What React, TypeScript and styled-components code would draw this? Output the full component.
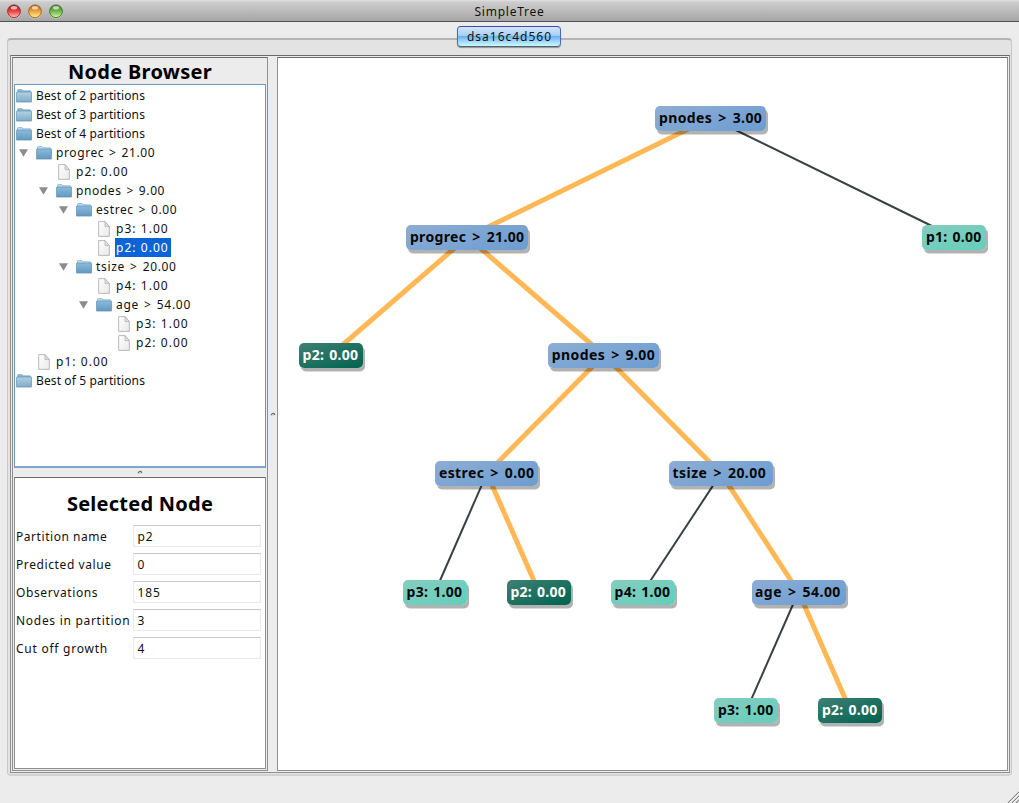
import React from "react";
import styled, { createGlobalStyle } from "styled-components";

const GlobalStyle = createGlobalStyle`
  * { box-sizing: border-box; }
  html, body { margin: 0; padding: 0; overflow: hidden; background: #ececec; }
`;

const Window = styled.div`
  position: relative;
  width: 1019px;
  height: 803px;
  display: flex;
  flex-direction: column;
  background: #ececec;
  color: #111;
  font: 12px/16px "Noto Sans", "Liberation Sans", sans-serif;
  white-space: pre;
`;

const TitleBar = styled.header`
  display: flex;
  align-items: center;
  height: 22px;
  flex: none;
  padding: 0 7px;
  background: linear-gradient(#e2e2e2 0, #cdcdcd 2px, #a6a6a6 100%);
  border-bottom: 1px solid #515151;
`;

const Lights = styled.div`
  display: flex;
  gap: 7px;
  width: 60px;
`;

const Title = styled.h1`
  flex: 1;
  margin: 0 60px 0 0;
  padding-top: 2px;
  text-align: center;
  font-size: 12px;
  font-weight: 400;
  line-height: 19px;
  letter-spacing: 0.75px;
`;

const TabStrip = styled.div`
  position: relative;
  z-index: 1;
  display: flex;
  justify-content: center;
  height: 25px;
  margin-bottom: -9px;
  padding-top: 4px;
  flex: none;
`;

const Tab = styled.button`
  width: 104px;
  height: 21px;
  margin-right: 1px;
  padding: 0 0 0 1px;
  border: 1px solid #3c62b4;
  border-color: #4348b0 #4a6cb4 #4d6478;
  border-radius: 4px;
  background: linear-gradient(#d3e5f9 0, #a9d0f6 44%, #6cb1ee 50%, #a5dbfd 78%, #c8f8ff 100%);
  box-shadow: 0 1px 1px rgba(0, 0, 0, 0.35);
  font: inherit;
  font-size: 12px;
  line-height: 18px;
  letter-spacing: 1px;
  color: #111;
`;

const GroupBox = styled.main`
  display: flex;
  width: 1005px;
  height: 738px;
  flex: none;
  margin-left: 7px;
  padding: 15px 1px 2px 2px;
  border: 1px solid #c8c8c8;
  border-top: 2px solid #b4b4b4;
  border-bottom: 2px solid #d2d2d2;
  border-radius: 4px;
  background: #e3e3e3;
`;

const SplitPane = styled.div`
  display: flex;
  width: 1000px;
  height: 718px;
  padding: 1px;
  border: 1px solid #8f8f8f;
  border-top-color: #6b6b6b;
  background: #ececec;
`;

const SidePane = styled.aside`
  display: flex;
  flex-direction: column;
  width: 256px;
  height: 714px;
  flex: none;
  padding: 0 1px 1px;
  border: 1px solid #8f8f8f;
  border-top-color: #6b6b6b;
  background: #ececec;
`;

const Heading = styled.h2<{ $tracking: number; $height: number; $line: number }>`
  height: ${(p) => p.$height}px;
  margin: 0;
  flex: none;
  text-align: center;
  color: #000;
  font-size: 20px;
  font-weight: 700;
  line-height: ${(p) => p.$line}px;
  letter-spacing: ${(p) => p.$tracking}px;
`;

const TreeList = styled.ul`
  display: flex;
  flex-direction: column;
  height: 384px;
  flex: none;
  margin: 0;
  padding: 1px;
  list-style: none;
  border: 1px solid #7297bd;
  border-bottom: 2px solid #7fa6cf;
  background: #fff;
`;

const TreeRow = styled.li<{ $depth: number }>`
  display: flex;
  align-items: center;
  height: 19px;
  flex: none;
  padding-left: ${(p) => Math.max(0, p.$depth - 1) * 20}px;
`;

const Twisty = styled.span`
  width: 20px;
  height: 19px;
  display: flex;
  align-items: center;
  padding-left: 3px;
`;

const IconSlot = styled.span`
  display: flex;
  width: 16px;
  height: 19px;
  justify-content: center;
  align-items: center;
`;

const RowLabel = styled.span<{ $selected?: boolean; $tracking: number; $gap: number }>`
  height: 19px;
  margin-left: 3px;
  padding: 0 2px 0 1px;
  line-height: 19px;
  letter-spacing: ${(p) => p.$tracking}px;
  word-spacing: ${(p) => p.$gap}px;
  background: ${(p) => (p.$selected ? "#0a64d6" : "transparent")};
  color: ${(p) => (p.$selected ? "#fff" : "#111")};
`;

const Grip = styled.div<{ $vertical?: boolean }>`
  display: flex;
  flex: none;
  align-items: center;
  justify-content: center;
  width: ${(p) => (p.$vertical ? "9px" : "auto")};
  height: ${(p) => (p.$vertical ? "auto" : "9px")};
`;

const Details = styled.section`
  flex: 1;
  padding-top: 7px;
  border: 1px solid #8f8f8f;
  border-top-color: #6b6b6b;
  background: #fff;
`;

const FieldList = styled.div`
  padding-top: 2px;
`;

const Field = styled.label`
  display: flex;
  align-items: center;
  height: 22px;
  margin-bottom: 6px;
  padding-left: 1px;
`;

const FieldName = styled.span<{ $tracking: number }>`
  width: 117px;
  flex: none;
  padding-top: 1px;
  letter-spacing: ${(p) => p.$tracking}px;
`;

const FieldValue = styled.span`
  width: 128px;
  height: 22px;
  padding-left: 3.5px;
  line-height: 21px;
  letter-spacing: 0.9px;
  border: 1px solid #e9e9e9;
  border-top: 1px solid #c6c6c6;
  background: #fff;
`;

const Canvas = styled.section`
  position: relative;
  width: 731px;
  height: 714px;
  flex: none;
  border: 1px solid #8f8f8f;
  border-top-color: #6b6b6b;
  background: #fff;
`;

const Edges = styled.svg`
  position: absolute;
  inset: 0;
`;

type Kind = "split" | "leaf" | "picked";

const fills: Record<Kind, string> = {
  split: "linear-gradient(160deg, #8dadd3, #6b9dd2)",
  leaf: "linear-gradient(160deg, #85cdbf, #65cebb)",
  picked: "linear-gradient(160deg, #3f8173, #00624f)",
};

const Node = styled.div<{ $x: number; $y: number; $w: number; $kind: Kind; $tracking: number }>`
  position: absolute;
  left: ${(p) => p.$x - p.$w / 2 - 278}px;
  top: ${(p) => p.$y - 58}px;
  width: ${(p) => p.$w}px;
  height: 24.5px;
  padding-left: 3.5px;
  border-radius: 5px;
  background: ${(p) => fills[p.$kind]};
  box-shadow: 2px 3.5px 0.5px rgba(0, 0, 0, 0.3);
  color: ${(p) => (p.$kind === "picked" ? "#fff" : "#080808")};
  font-size: 14px;
  font-weight: 700;
  line-height: 24px;
  letter-spacing: ${(p) => p.$tracking}px;
  word-spacing: ${(p) => (p.$kind === "split" ? 2 : 1)}px;
`;

const ResizeCorner = styled.svg`
  position: absolute;
  right: 0;
  bottom: 0;
`;

function Light({ id, dark, mid, glow }: { id: string; dark: string; mid: string; glow: string }) {
  return (
    <svg width="14" height="16" viewBox="0 0 14 16">
      <defs>
        <linearGradient id={id} x1="0" y1="0" x2="0" y2="1">
          <stop offset="0" stopColor={dark} />
          <stop offset="0.5" stopColor={mid} />
          <stop offset="1" stopColor={glow} />
        </linearGradient>
      </defs>
      <circle cx="7" cy="8.9" r="6.8" fill="#dedede" opacity="0.7" />
      <circle cx="7" cy="8.3" r="6.4" fill={`url(#${id})`} stroke={dark} strokeWidth="0.9" />
      <ellipse cx="7" cy="4.7" rx="3.2" ry="1.8" fill="#fff" opacity="0.65" />
    </svg>
  );
}

function Folder({ open }: { open?: boolean }) {
  const id = open ? "folder-open" : "folder-closed";
  return (
    <svg width="16" height="14" viewBox="0 0 16 14">
      <defs>
        <linearGradient id={id} x1="0" y1="0" x2="0" y2="1">
          <stop offset="0" stopColor={open ? "#8dbada" : "#b4d1e3"} />
          <stop offset="1" stopColor={open ? "#6199c0" : "#7fabc9"} />
        </linearGradient>
      </defs>
      <path
        d="M1.5 12V1.5Q1.5.5 2.5.5H5.5Q6.5.5 6.8 1.8H14Q14.8 1.8 14.8 3V12Z"
        fill={open ? "#b9dcef" : "#8db5cf"}
        stroke="#7da9c6"
        strokeWidth="0.7"
      />
      <rect x="0.4" y="3" width="15.2" height="10" rx="0.6" fill={`url(#${id})`} stroke="#5f93b7" strokeWidth="0.7" />
      <path d="M.5 13.5H15.5" stroke="#c5cdd3" strokeWidth="0.6" />
    </svg>
  );
}

function Doc() {
  return (
    <svg width="12" height="16" viewBox="0 0 13 16" preserveAspectRatio="none">
      <defs>
        <linearGradient id="paper" x1="0" y1="0" x2="1" y2="1">
          <stop offset="0" stopColor="#fff" />
          <stop offset="1" stopColor="#e9e9e9" />
        </linearGradient>
      </defs>
      <path d="M.7.6H7.6L12.3 5.6V15.4H.7Z" fill="url(#paper)" stroke="#b0b0b0" strokeWidth="0.9" />
      <path d="M7.6.6V5.6H12.3Z" fill="#e2e2e2" stroke="#b0b0b0" strokeWidth="0.8" />
    </svg>
  );
}

function GripMark() {
  return (
    <svg width="6" height="5" viewBox="0 0 6 5">
      <path d="M1 3.2Q2.2 1 4.2 1.6L4.8 3" stroke="#6c6c6c" strokeWidth="1.2" fill="none" />
      <path d="M2.4 3.6L4 2.6" stroke="#bbb" strokeWidth="0.8" />
    </svg>
  );
}

type Icon = "closed" | "open" | "doc";
const rows: { text: string; depth: number; icon: Icon; tracking: number; gap: number; selected?: boolean }[] = [
  { text: "Best of 2 partitions", depth: 0, icon: "closed", tracking: 0.12, gap: 0 },
  { text: "Best of 3 partitions", depth: 0, icon: "closed", tracking: 0.12, gap: 0 },
  { text: "Best of 4 partitions", depth: 0, icon: "open", tracking: 0.12, gap: 0 },
  { text: "progrec > 21.00", depth: 1, icon: "open", tracking: 0.6, gap: 1.2 },
  { text: "p2: 0.00", depth: 2, icon: "doc", tracking: 1.05, gap: 0 },
  { text: "pnodes > 9.00", depth: 2, icon: "open", tracking: 0.6, gap: 1.2 },
  { text: "estrec > 0.00", depth: 3, icon: "open", tracking: 0.6, gap: 1.2 },
  { text: "p3: 1.00", depth: 4, icon: "doc", tracking: 1.05, gap: 0 },
  { text: "p2: 0.00", depth: 4, icon: "doc", tracking: 1.05, gap: 0, selected: true },
  { text: "tsize > 20.00", depth: 3, icon: "open", tracking: 0.65, gap: 1.4 },
  { text: "p4: 1.00", depth: 4, icon: "doc", tracking: 1.05, gap: 0 },
  { text: "age > 54.00", depth: 4, icon: "open", tracking: 0.7, gap: 1.3 },
  { text: "p3: 1.00", depth: 5, icon: "doc", tracking: 1.05, gap: 0 },
  { text: "p2: 0.00", depth: 5, icon: "doc", tracking: 1.05, gap: 0 },
  { text: "p1: 0.00", depth: 1, icon: "doc", tracking: 1.05, gap: 0 },
  { text: "Best of 5 partitions", depth: 0, icon: "closed", tracking: 0.12, gap: 0 },
];

const fields = [
  { name: "Partition name", value: "p2", tracking: 0.55 },
  { name: "Predicted value", value: "0", tracking: 0.6 },
  { name: "Observations", value: "185", tracking: 0.6 },
  { name: "Nodes in partition", value: "3", tracking: 0.71 },
  { name: "Cut off growth", value: "4", tracking: 0.75 },
];

const nodes: { text: string; x: number; y: number; w: number; kind: Kind; tracking: number }[] = [
  { text: "pnodes > 3.00", x: 710.9, y: 106, w: 111, kind: "split", tracking: 0.4 },
  { text: "progrec > 21.00", x: 467.4, y: 225, w: 122, kind: "split", tracking: 0.35 },
  { text: "p1: 0.00", x: 954.4, y: 225, w: 64, kind: "leaf", tracking: 0.3 },
  { text: "p2: 0.00", x: 331, y: 343, w: 64, kind: "picked", tracking: 0.3 },
  { text: "pnodes > 9.00", x: 603.8, y: 343, w: 111, kind: "split", tracking: 0.4 },
  { text: "estrec > 0.00", x: 486.9, y: 461.4, w: 103, kind: "split", tracking: 0.4 },
  { text: "tsize > 20.00", x: 721, y: 461.4, w: 104, kind: "split", tracking: 0.45 },
  { text: "p3: 1.00", x: 435, y: 580, w: 64, kind: "leaf", tracking: 0.3 },
  { text: "p2: 0.00", x: 538.9, y: 580, w: 64, kind: "picked", tracking: 0.3 },
  { text: "p4: 1.00", x: 643, y: 580, w: 64, kind: "leaf", tracking: 0.3 },
  { text: "age > 54.00", x: 798.5, y: 580, w: 94, kind: "split", tracking: 0.45 },
  { text: "p3: 1.00", x: 746.4, y: 698.4, w: 64, kind: "leaf", tracking: 0.3 },
  { text: "p2: 0.00", x: 850.4, y: 698.4, w: 64, kind: "picked", tracking: 0.3 },
];

// [parent, child, on the highlighted path]
const edges: [number, number, boolean][] = [
  [0, 1, true],
  [0, 2, false],
  [1, 3, true],
  [1, 4, true],
  [4, 5, true],
  [4, 6, true],
  [5, 7, false],
  [5, 8, true],
  [6, 9, false],
  [6, 10, true],
  [10, 11, false],
  [10, 12, true],
];

export default function App() {
  return (
    <Window>
      <GlobalStyle />
      <TitleBar>
        <Lights>
          <Light id="close" dark="#8d2023" mid="#ee4444" glow="#ffc2bd" />
          <Light id="minimize" dark="#a25a18" mid="#f3a340" glow="#fff190" />
          <Light id="zoom" dark="#39711f" mid="#74b850" glow="#d2f59e" />
        </Lights>
        <Title>SimpleTree</Title>
      </TitleBar>
      <TabStrip>
        <Tab>dsa16c4d560</Tab>
      </TabStrip>
      <GroupBox>
        <SplitPane>
          <SidePane>
            <Heading $tracking={0.3} $height={26} $line={28}>Node Browser</Heading>
            <TreeList>
              {rows.map((row, i) => (
                <TreeRow key={i} $depth={row.depth}>
                  {row.depth > 0 && (
                    <Twisty>
                      {row.icon === "open" && (
                        <svg width="9" height="8" viewBox="0 0 9 8">
                          <path d="M0 .3H9L4.5 7.8Z" fill="#8c8c8c" />
                        </svg>
                      )}
                    </Twisty>
                  )}
                  <IconSlot>{row.icon === "doc" ? <Doc /> : <Folder open={row.icon === "open"} />}</IconSlot>
                  <RowLabel $tracking={row.tracking} $gap={row.gap} $selected={row.selected}>{row.text}</RowLabel>
                </TreeRow>
              ))}
            </TreeList>
            <Grip><GripMark /></Grip>
            <Details>
              <Heading $tracking={0.25} $height={38} $line={38}>Selected Node</Heading>
              <FieldList>
                {fields.map((f) => (
                  <Field key={f.name}>
                    <FieldName $tracking={f.tracking}>{f.name}</FieldName>
                    <FieldValue>{f.value}</FieldValue>
                  </Field>
                ))}
              </FieldList>
            </Details>
          </SidePane>
          <Grip $vertical><GripMark /></Grip>
          <Canvas>
            <Edges width="729" height="712" viewBox="278 58 729 712">
              {edges.map(([a, b, lit]) => (
                <line
                  key={`${a}-${b}`}
                  x1={nodes[a].x}
                  y1={nodes[a].y + 12}
                  x2={nodes[b].x}
                  y2={nodes[b].y + 12}
                  stroke={lit ? "#ffb855" : "#3b4044"}
                  strokeWidth={lit ? 5 : 2}
                />
              ))}
            </Edges>
            {nodes.map((n, i) => (
              <Node key={i} $x={n.x} $y={n.y} $w={n.w} $kind={n.kind} $tracking={n.tracking}>{n.text}</Node>
            ))}
          </Canvas>
        </SplitPane>
      </GroupBox>
      <ResizeCorner width="12" height="12" viewBox="0 0 12 12">
        <path d="M1 12L12 1M5 12L12 5M9 12L12 9" stroke="#858585" strokeWidth="1.1" />
        <path d="M2.2 12L12 2.2M6.2 12L12 6.2" stroke="#fff" strokeWidth="0.7" />
      </ResizeCorner>
    </Window>
  );
}
